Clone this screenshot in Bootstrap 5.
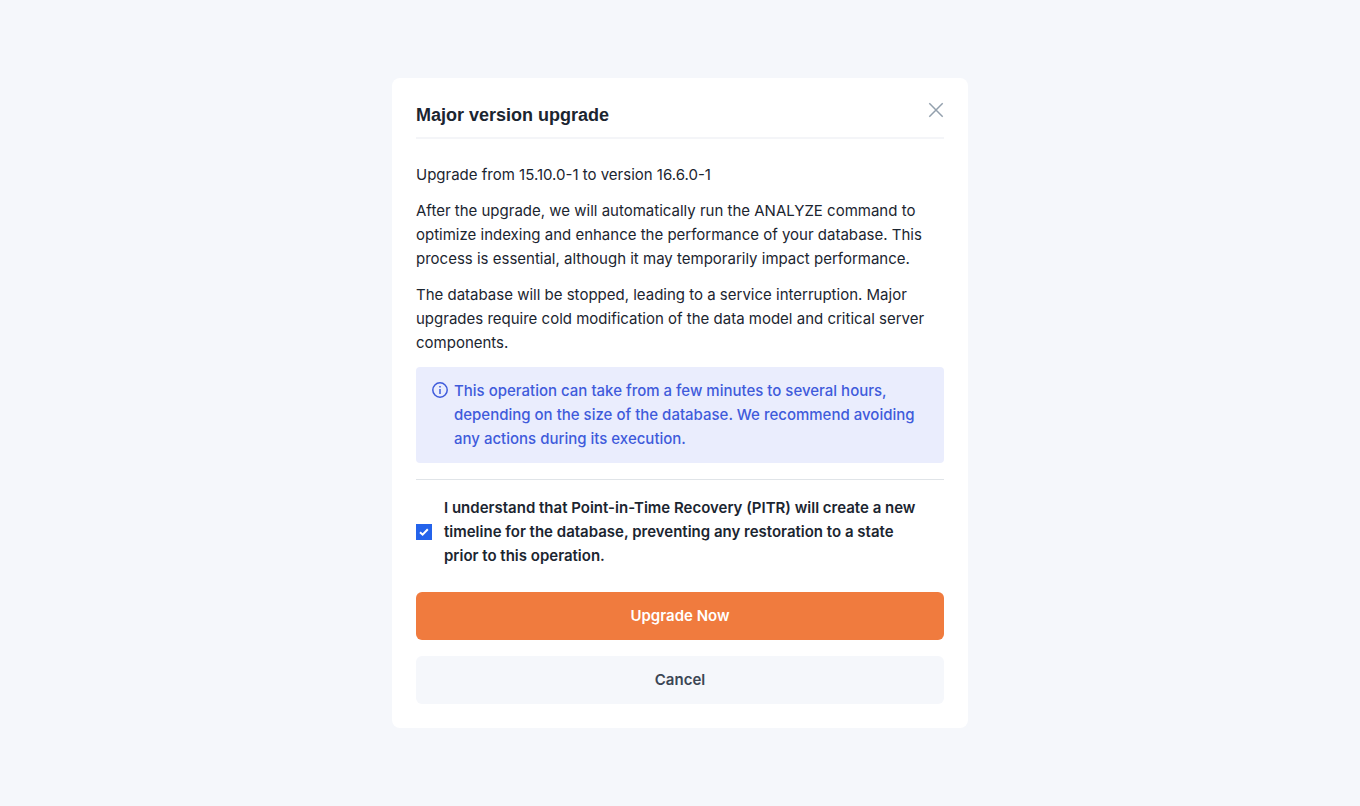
<!DOCTYPE html>
<html lang="en">
<head>
<meta charset="utf-8">
<meta name="viewport" content="width=device-width, initial-scale=1">
<title>Major version upgrade</title>
<link rel="stylesheet" href="https://cdn.jsdelivr.net/npm/bootstrap@5.3.0/dist/css/bootstrap.min.css">
<style>
body { background: #f5f7fb; color: #1b2530; font-family: Inter, "Liberation Sans", sans-serif; font-size: 15px; line-height: 24px; }
.upgrade-dialog { max-width: 576px; border-radius: 8px; }
.dialog-head { border-bottom: 2px solid #f4f5f8; padding-bottom: 9px; margin-bottom: 24px; }
.dialog-head h1 { font-family: "Liberation Sans", sans-serif; font-size: 18px; line-height: 26px; font-weight: 700; }
.close-btn { width: 16px; height: 16px; color: #93a0ad; }
.copy p { margin-bottom: 12px; }
.notice { background: #eaedfd; color: #3f5bdb; border-radius: 4px; padding: 12px 16px; gap: 6px; font-weight: 500; }
.notice svg { margin-top: 3px; }
.consent { border-top: 1px solid #e0e4e8; margin-top: 16px; padding-top: 16px; gap: 12px; font-weight: 600; }
.consent .form-check-input { width: 16px; height: 16px; border-radius: 0; }
.consent .form-check-input:checked { background-color: #2463eb; border-color: #2463eb; background-image: url("data:image/svg+xml,%3csvg xmlns='http://www.w3.org/2000/svg' viewBox='0 0 14 14'%3e%3cpath fill='none' stroke='%23fff' stroke-width='2' d='M3 7.3l2.6 2.4 5.2-5.4'/%3e%3c/svg%3e"); }
.action { height: 48px; border-radius: 6px; font-size: 15px; font-weight: 600; }
.action-primary { background: #f07b3e; color: #fff; }
.action-muted { background: #f5f7fb; color: #3b4654; }
</style>
</head>
<body class="min-vh-100 d-flex align-items-center justify-content-center">
<main class="upgrade-dialog w-100 bg-white p-4" role="dialog" aria-labelledby="dialog-title">
  <header class="dialog-head d-flex justify-content-between align-items-start">
    <h1 id="dialog-title" class="m-0">Major version upgrade</h1>
    <button type="button" class="close-btn btn p-0 border-0 d-flex" aria-label="Close">
      <svg width="16" height="16" viewBox="0 0 16 16" fill="none" stroke="currentColor" stroke-width="1.5"><path d="M1.3 1.3l13.4 13.4M14.7 1.3l-13.4 13.4"/></svg>
    </button>
  </header>
  <section class="copy">
    <p>Upgrade from 15.10.0-1 to version 16.6.0-1</p>
    <p>After the upgrade, we will automatically run the ANALYZE command to<br>optimize indexing and enhance the performance of your database. This<br>process is essential, although it may temporarily impact performance.</p>
    <p>The database will be stopped, leading to a service interruption. Major<br>upgrades require cold modification of the data model and critical server<br>components.</p>
  </section>
  <div class="notice d-flex align-items-start" role="note">
    <svg class="flex-shrink-0" width="16" height="16" viewBox="0 0 16 16" fill="none" stroke="currentColor" stroke-width="1.5"><circle cx="8" cy="8" r="7.2"/><path d="M8 7v5M8 4v1.6"/></svg>
    <div>This operation can take from a few minutes to several hours,<br>depending on the size of the database. We recommend avoiding<br>any actions during its execution.</div>
  </div>
  <div class="consent d-flex align-items-center mb-4">
    <input class="form-check-input m-0 flex-shrink-0" type="checkbox" id="consent" checked>
    <label for="consent">I understand that Point-in-Time Recovery (PITR) will create a new<br>timeline for the database, preventing any restoration to a state<br>prior to this operation.</label>
  </div>
  <div class="d-grid gap-3">
    <button type="button" class="btn border-0 action action-primary">Upgrade Now</button>
    <button type="button" class="btn border-0 action action-muted">Cancel</button>
  </div>
</main>
<script src="https://cdn.jsdelivr.net/npm/bootstrap@5.3.0/dist/js/bootstrap.bundle.min.js"></script>
</body>
</html>
